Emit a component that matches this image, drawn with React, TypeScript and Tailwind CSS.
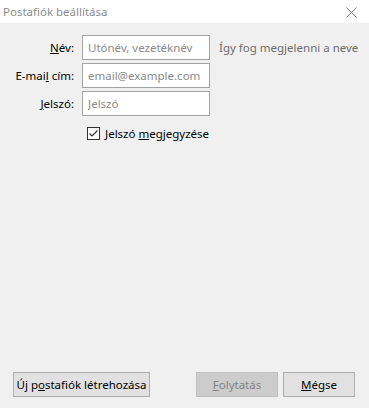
import React from 'react';

const FONT = { fontFamily: '"Noto Sans", "Open Sans", sans-serif' };

function Field({ label, placeholder }: { label: React.ReactNode; placeholder: string }) {
  return (
    <>
      <label className="whitespace-nowrap text-right text-[11.5px] text-black leading-[25px]">{label}</label>
      <input
        placeholder={placeholder}
        className="h-[25px] w-[128px] border border-[#a3a3a3] bg-white px-[5px] text-[11.5px] text-black outline-none placeholder:text-[#8a8a8a]"
        style={FONT}
      />
    </>
  );
}

export default function App() {
  return (
    <div className="flex h-[408px] w-[369px] flex-col bg-[#f0f0f0]" style={FONT}>
      {/* Title bar */}
      <div className="flex h-[23px] items-center justify-between bg-white pl-[3px] pr-[12px]">
        <span className="text-[11.5px] text-[#8c8c8c]">Postafiók beállítása</span>
        <svg width="11" height="11" viewBox="0 0 11 11" className="mt-[2px]">
          <path d="M0.5 0.5L10.5 10.5M10.5 0.5L0.5 10.5" stroke="#7a7a7a" strokeWidth="1" />
        </svg>
      </div>

      {/* Form */}
      <div className="grid grid-cols-[74px_128px_auto] items-center gap-x-[8px] gap-y-[3px] pt-[12px]">
        <Field label={<><u>N</u>év:</>} placeholder="Utónév, vezetéknév" />
        <span className="whitespace-nowrap pl-[1px] text-[11.5px] text-[#6d6d6d]">Így fog megjelenni a neve</span>
        <Field label={<>E-mai<u>l</u> cím:</>} placeholder="email@example.com" />
        <span />
        <Field label={<><u>J</u>elszó:</>} placeholder="Jelszó" />
        <span />
        <span />
        <label className="col-span-2 mt-[6px] flex items-center gap-[5px] pl-[5px] text-[11.5px] text-black">
          <span className="flex h-[13px] w-[13px] items-center justify-center border border-[#333] bg-white">
            <svg width="11" height="11" viewBox="0 0 11 11">
              <path d="M1.5 5.5L4 8L9.5 2.5" fill="none" stroke="#333" strokeWidth="1.2" />
            </svg>
          </span>
          <span>
            Jelszó <u>m</u>egjegyzése
          </span>
        </label>
      </div>

      <div className="flex-1" />

      {/* Buttons */}
      <div className="flex items-center pb-[11px] pl-[13px] pr-[14px]">
        <button className="h-[25px] w-[137px] whitespace-nowrap border border-[#adadad] bg-[#e1e1e1] text-[11.5px] text-black">
          Új p<u>o</u>stafiók létrehozása
        </button>
        <div className="flex-1" />
        <button className="h-[25px] w-[82px] whitespace-nowrap border border-[#bfbfbf] bg-[#cccccc] text-[11.5px] text-[#838383]">
          <u>F</u>olytatás
        </button>
        <button className="ml-[5px] h-[25px] w-[72px] whitespace-nowrap border border-[#adadad] bg-[#e1e1e1] text-[11.5px] text-black">
          <u>M</u>égse
        </button>
      </div>
    </div>
  );
}
